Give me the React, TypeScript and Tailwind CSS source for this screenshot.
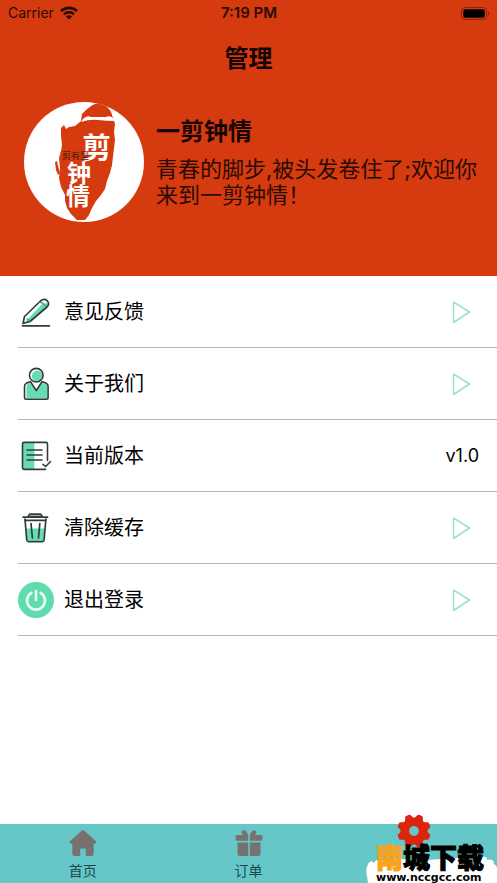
import type { ReactNode } from 'react';

const ink = '#333c3c';
const mint = '#66dcb2';

function WifiIcon() {
  return (
    <svg width="18" height="14" viewBox="0 0 18 14" fill="none" stroke="#2a0b04" strokeWidth="2.6">
      <path d="M1 5.2C5.4 .8 12.6 .8 17 5.2" />
      <path d="M4 8.4C6.8 5.6 11.2 5.6 14 8.4" />
      <path d="M9 13.4L5.9 10.4C7.6 8.8 10.4 8.8 12.1 10.4Z" fill="#2a0b04" stroke="none" />
    </svg>
  );
}

function BatteryIcon() {
  return (
    <svg width="29" height="13" viewBox="0 0 29 13">
      <rect x=".5" y=".5" width="25" height="12" rx="3.5" fill="none" stroke="#85240c" />
      <rect x="2.3" y="2.3" width="21.4" height="8.4" rx="1.8" fill="#000" />
      <path d="M27 4.2c1.6.5 1.6 4.1 0 4.6z" fill="#85240c" />
    </svg>
  );
}

function Avatar() {
  return (
    <svg className="size-[120px] shrink-0" viewBox="0 0 120 120" role="img" aria-label="一剪钟情">
      <circle cx="60" cy="60" r="60" fill="#fff" />
      <path
        d="M67 4Q71 1 76 2L82 4Q87 8 88 13L91 22L90 30L91 38L90 46L88 63L86 71L83 79L81 87L77 93L72 99L68 106L65 113L61 118L53 118L47 112L43 106L41 99L41 93L37 85L35 76L36 66L35 56L37 49L38 43L37 34L37 26L40 23L42 27L45 25L51 24L57 19L58 12L62 8Z"
        fill="#d63a0f"
      />
      <path d="M31 60l2-1 1 5 2 7-2 2-2-5z" fill="#d63a0f" />
      <path d="M59 17Q63 13 67 15H82Q86 13 89 16L93 19Q82 19 74 18Q66 17 57 20Z" fill="#fff" />
      <g fill="#fff" className="font-['Noto_Sans_CJK_SC',sans-serif] font-bold">
        <text x="58" y="57" fontSize="29">剪</text>
        <text x="43" y="80" fontSize="24">钟</text>
        <text x="42" y="103" fontSize="24">情</text>
      </g>
      <text x="38" y="57" fontSize="9" fill="#4a160c" className="font-['Liberation_Serif','Noto_Sans_CJK_SC',serif]">
        剪有型
      </text>
    </svg>
  );
}

function PencilIcon() {
  return (
    <svg className="size-9" viewBox="0 0 36 36" fill="none" stroke={ink} strokeWidth="1.7" strokeLinecap="round" strokeLinejoin="round">
      <path d="M7.5 27.5L24 10L29.5 9L29 13L12 28L6 29Z" fill={mint} stroke="none" />
      <path d="M5 29.5L6.5 22.5L22.5 7Q26 4 29 6.5Q32 9.5 29 13L12 27.5Z" />
      <path d="M21.5 8.5l2.5.5M24 8.5l3.5 3.5M9 25l3 2" stroke="#3c9d84" strokeWidth="1.2" />
      <path d="M4.5 31.8H31.5" />
    </svg>
  );
}

function PersonIcon() {
  return (
    <svg className="size-9" viewBox="0 0 36 36" fill="none" stroke={ink} strokeWidth="1.6" strokeLinejoin="round">
      <path d="M8.5 20Q9 17.5 12 17L18 24.5L24 17Q29.5 18 29.5 21V32.5H8.5Z" fill={mint} stroke="none" />
      <circle cx="19.2" cy="10" r="5.4" fill={mint} stroke="none" />
      <circle cx="18.3" cy="9.2" r="6.8" />
      <path d="M12.5 15.8Q6.5 17 6.5 20.5V31.5Q6.5 33.2 8.2 33.2H28.4Q30.1 33.2 30.1 31.5V20.5Q30.1 17 24 15.8L18.3 24.5Z" />
    </svg>
  );
}

function DocumentIcon() {
  return (
    <svg className="size-9" viewBox="0 0 36 36" fill="none" stroke={ink} strokeWidth="1.6" strokeLinecap="round">
      <path d="M5 5H16.3V31H5Z" fill={mint} stroke="none" />
      <path d="M29.5 22.5V6Q29.5 4.4 28 4.4H6Q4.5 4.4 4.5 6V29.8Q4.5 31.4 6 31.4H27.5" />
      <path d="M9 12H24M9 17H24M9 22H24" />
      <path d="M25 26.3L27.7 28.5L32.5 23.5" />
    </svg>
  );
}

function TrashIcon() {
  return (
    <svg className="size-9" viewBox="0 0 36 36" fill="none" stroke={ink} strokeWidth="1.7" strokeLinecap="round" strokeLinejoin="round">
      <path d="M8 18.6H27L26 30.7H9Z" fill={mint} stroke="none" />
      <path d="M10.5 6.8V5.5L11.8 4.2H22.5L23.8 5.5V6.8Z" fill="#a9b5b2" />
      <path d="M5.2 7.2H29.5M7.2 10.4H27.6" />
      <path d="M7 9L8.7 30Q8.9 31.6 10.5 31.6H24.3Q25.9 31.6 26.1 30L27.9 9" />
      <path d="M13 13.6L14.4 28M21.8 13.6L20.5 28" />
    </svg>
  );
}

function PowerIcon() {
  return (
    <svg className="size-9" viewBox="0 0 36 36" fill="none" stroke="#e8fff6" strokeWidth="2.6" strokeLinecap="round">
      <circle cx="18" cy="18" r="18" fill="#5fdbae" stroke="none" />
      <path d="M13.4 10.8A9 9 0 1 0 22.6 10.8" />
      <path d="M18 9V18" />
    </svg>
  );
}

function ArrowIcon() {
  return (
    <svg className="size-9" viewBox="0 0 36 36" fill="none" stroke="#9edfcd" strokeWidth="1.5" strokeLinejoin="round">
      <path d="M10.5 8V28.5L26.5 18Z" />
    </svg>
  );
}

function HomeIcon() {
  return (
    <svg width="28" height="27" viewBox="0 0 28 27" fill="#777170">
      <path d="M12.6.8Q14 -.3 15.4.8L27 11.2Q28 12.7 26.5 13.4H24.7V23.8Q24.7 26 22.5 26H16.8V19.7Q16.8 18.6 15.7 18.6H12.3Q11.2 18.6 11.2 19.7V26H5.5Q3.3 26 3.3 23.8V13.4H1.5Q0 12.7 1 11.2Z" />
    </svg>
  );
}

function GiftIcon() {
  return (
    <svg width="28" height="27" viewBox="0 0 28 27" fill="#777170">
      <path d="M13.2 5V10.8H1.8Q.6 10.8.6 9.6V6.4Q.6 5 2 5H8Q5.5 2.3 7.3.8Q10.5 -1.2 13.2 5Z" />
      <path d="M14.8 5V10.8H26.2Q27.4 10.8 27.4 9.6V6.4Q27.4 5 26 5H20Q22.5 2.3 20.7.8Q17.5 -1.2 14.8 5Z" />
      <path d="M2.5 12.5H13.2V26H4.5Q2.5 26 2.5 24ZM14.8 12.5H25.5V24Q25.5 26 23.5 26H14.8Z" />
    </svg>
  );
}

function GearIcon() {
  return (
    <svg width="34" height="34" viewBox="0 0 34 34" fill="#dc240f">
      <circle cx="17" cy="17" r="9.2" fill="none" stroke="#dc240f" strokeWidth="8.6" />
      {[0, 45, 90, 135, 180, 225, 270, 315].map((angle) => (
        <path key={angle} d="M12.2 5.4L14 1.2Q14.4 .2 15.4 .2H18.6Q19.6 .2 20 1.2L21.8 5.4Z" transform={`rotate(${angle + 22.5} 17 17)`} />
      ))}
    </svg>
  );
}

interface MenuItem {
  label: string;
  icon: ReactNode;
  value?: string;
}

const menuItems: MenuItem[] = [
  { label: '意见反馈', icon: <PencilIcon /> },
  { label: '关于我们', icon: <PersonIcon /> },
  { label: '当前版本', icon: <DocumentIcon />, value: 'v1.0' },
  { label: '清除缓存', icon: <TrashIcon /> },
  { label: '退出登录', icon: <PowerIcon /> },
];

function MenuRow({ label, icon, value }: MenuItem) {
  const rowClass = 'flex h-[72px] w-full items-center gap-[10px] border-b border-[#b4b4b4] pt-px pr-[18px] text-left text-xl text-black';

  if (value) {
    return (
      <div className={rowClass}>
        {icon}
        <span className="flex-1">{label}</span>
        <span className="text-lg">{value}</span>
      </div>
    );
  }

  return (
    <button type="button" className={rowClass}>
      {icon}
      <span className="flex-1">{label}</span>
      <ArrowIcon />
    </button>
  );
}

function Watermark() {
  return (
    <div className="pointer-events-none absolute right-0 bottom-0 h-[34px] w-[131px]">
      <svg className="absolute inset-0 size-full" viewBox="0 0 131 34" preserveAspectRatio="none" fill="#fff">
        <path d="M2 34L1 27Q-1 21 2 15Q5 10 8 14Q10 9 15 12L30 10L60 11L90 9L110 10Q113 5 117 8Q121 7 121 11Q128 9 128 15Q132 17 131 22V34Z" />
      </svg>
      <div className="relative flex flex-col items-start pl-[10px]">
        <span className="-mt-1 text-[27px] leading-[28px] font-black text-black [-webkit-text-stroke:1px_currentColor]">
          <span className="text-[#f9a21b]">南</span>城下载
        </span>
        <span className="font-['DejaVu_Sans',sans-serif] text-[11px] leading-[10px] font-bold text-black">
          www.nccgcc.com
        </span>
      </div>
    </div>
  );
}

export default function App() {
  return (
    <div className="flex min-h-screen flex-col bg-white font-['Inter','Noto_Sans_CJK_SC',sans-serif]">
      <header className="bg-[#d63a0f] pb-[54px] text-[#2a0b04]">
        <div className="grid h-[26px] grid-cols-3 items-center pr-[7px] pl-2 text-sm">
          <div className="flex items-center gap-[6px]">
            <span>Carrier</span>
            <WifiIcon />
          </div>
          <span className="text-center text-[15px] font-semibold">7:19 PM</span>
          <div className="flex justify-end">
            <BatteryIcon />
          </div>
        </div>
        <h1 className="pt-[17px] pb-[15px] text-center text-2xl font-bold text-[#170503]">管理</h1>
        <div className="flex gap-3 pt-3 pr-[14px] pl-6">
          <Avatar />
          <div className="pt-[14px]">
            <h2 className="text-2xl font-bold text-[#170503]">一剪钟情</h2>
            <p className="mt-2 text-[22px] leading-[26px]">青春的脚步,被头发卷住了;欢迎你来到一剪钟情！</p>
          </div>
        </div>
      </header>

      <main className="flex-1 pl-[18px]">
        {menuItems.map((item) => (
          <MenuRow key={item.label} {...item} />
        ))}
      </main>

      <nav className="relative flex h-[59px] bg-[#66c7c8] text-sm text-[#1f4748]">
        <a href="#home" className="flex flex-1 flex-col items-center pt-[6px]">
          <HomeIcon />
          <span className="mt-1 leading-5">首页</span>
        </a>
        <a href="#orders" className="flex flex-1 flex-col items-center pt-[6px]">
          <GiftIcon />
          <span className="mt-1 leading-5">订单</span>
        </a>
        <a href="#manage" aria-label="管理" className="-mt-[10px] flex flex-1 flex-col items-center">
          <GearIcon />
        </a>
        <Watermark />
      </nav>
    </div>
  );
}
